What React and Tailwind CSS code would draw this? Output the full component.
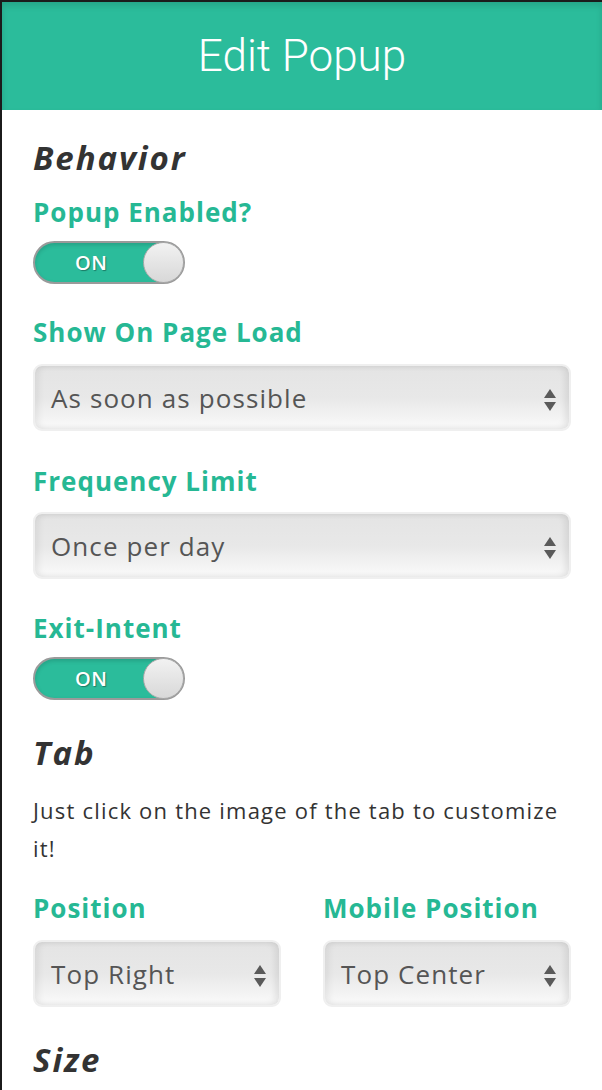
import React from "react";

const font = { fontFamily: "'Open Sans', Lato, sans-serif" };

function Toggle() {
  return (
    <div className="relative w-[152px] h-[43px] rounded-full border-2 border-[#9a9a9a] bg-[#2bbc9b] shadow-[inset_0_2px_4px_rgba(0,0,0,0.15)]">
      <span className="absolute left-[40px] top-[5px] text-[20px] font-semibold tracking-[0.5px] text-white [text-shadow:1px_1px_1px_rgba(0,0,0,0.35)]">ON</span>
      <div className="absolute right-[-1px] top-[-1px] w-[41px] h-[41px] rounded-full border border-[#aaa] bg-gradient-to-b from-[#f2f2f2] to-[#d8d8d8]" />
    </div>
  );
}

function Select({ value }) {
  return (
    <div className="relative h-[67px] rounded-[9px] border-2 border-[#efefef] bg-gradient-to-b from-[#e4e4e4] via-[#e8e8e8] to-[#fafafa] shadow-[inset_4px_0_6px_rgba(0,0,0,0.06),inset_-4px_0_6px_rgba(0,0,0,0.08)] flex items-center pl-[16px]">
      <span className="text-[26px] tracking-[1.1px] text-[#555] leading-[30px]">{value}</span>
      <svg className="absolute right-[13px] top-[23px]" width="12" height="22" viewBox="0 0 12 22">
        <polygon points="6,0 12,9 0,9" fill="#5a5a5a" />
        <polygon points="0,13 12,13 6,22" fill="#5a5a5a" />
      </svg>
    </div>
  );
}

function Label({ children }) {
  return <div className="text-[26px] font-bold tracking-[1px] text-[#26b894] leading-[30px]">{children}</div>;
}

function Heading({ children }) {
  return <div className="text-[33px] font-bold italic tracking-[1.9px] text-[#333] leading-[36px]">{children}</div>;
}

export default function App() {
  return (
    <div className="w-[602px] h-[1090px] overflow-hidden bg-[#1b1b1b] pt-[2px] pl-[2px]" style={font}>
      <div className="bg-white h-full">
        <div className="h-[108px] bg-[#2bbc9b] flex items-center justify-center shadow-[inset_0_4px_6px_rgba(0,0,0,0.12)]">
          <span className="text-white text-[44px] font-light" style={{ fontFamily: "Roboto, sans-serif" }}>Edit Popup</span>
        </div>
        <div className="px-[31px]">
          <div className="pt-[30px]"><Heading>Behavior</Heading></div>
          <div className="mt-[21px]"><Label>Popup Enabled?</Label></div>
          <div className="mt-[14px]"><Toggle /></div>
          <div className="mt-[33px]"><Label>Show On Page Load</Label></div>
          <div className="mt-[17px]"><Select value="As soon as possible" /></div>
          <div className="mt-[35px]"><Label>Frequency Limit</Label></div>
          <div className="mt-[16px]"><Select value="Once per day" /></div>
          <div className="mt-[34px]"><Label>Exit-Intent</Label></div>
          <div className="mt-[14px]"><Toggle /></div>
          <div className="mt-[35px]"><Heading>Tab</Heading></div>
          <p className="mt-[20px] text-[22px] tracking-[1.2px] leading-[38px] text-[#333]">Just click on the image of the tab to customize it!</p>
          <div className="mt-[26px] grid grid-cols-2 gap-x-[42px]">
            <div>
              <Label>Position</Label>
              <div className="mt-[17px]"><Select value="Top Right" /></div>
            </div>
            <div>
              <Label>Mobile Position</Label>
              <div className="mt-[17px]"><Select value="Top Center" /></div>
            </div>
          </div>
          <div className="mt-[35px]"><Heading>Size</Heading></div>
        </div>
      </div>
    </div>
  );
}
